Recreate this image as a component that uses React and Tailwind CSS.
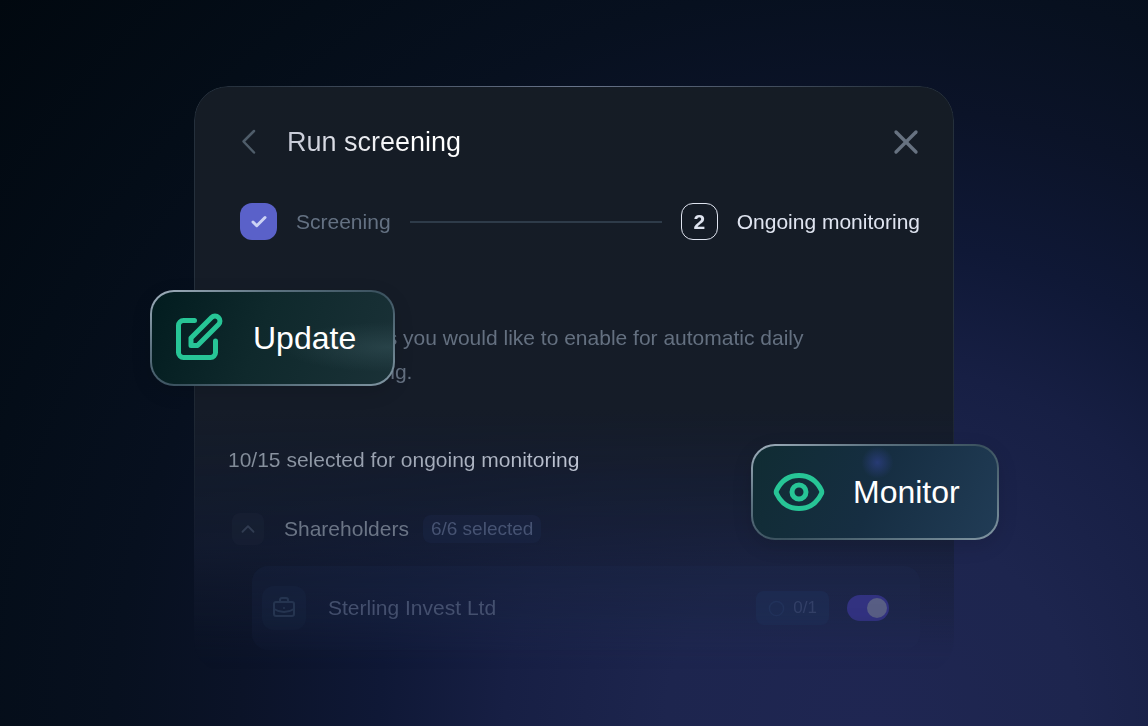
import React from "react";
import { Check, ChevronUp, BriefcaseBusiness, Circle, X } from "lucide-react";

function FloatingAction({ label, className, innerClassName, children }) {
  return (
    <button
      type="button"
      className={`absolute h-24 rounded-[24px] p-[2px] bg-[linear-gradient(155deg,#a3b2bf_0%,#5c7280_28%,#3a515e_52%,#556c79_72%,#8398a5_100%)] shadow-[0_6px_20px_rgba(0,0,0,0.12)] ${className}`}
    >
      <span
        className={`flex h-full items-center rounded-[22px] text-[32px] leading-10 text-white ${innerClassName}`}
      >
        {children}
        {label}
      </span>
    </button>
  );
}

function Stepper() {
  return (
    <ol className="mt-[43px] flex h-[37px] items-center pl-3">
      <li className="flex items-center gap-[19px] text-[#647182]">
        <span className="flex h-[37px] w-[37px] items-center justify-center rounded-[12px] bg-[#5a61c9] text-[#ccd2f4]">
          <Check size={18} strokeWidth={4} />
        </span>
        Screening
      </li>
      <li aria-hidden="true" className="mx-[19px] h-[2px] flex-1 bg-[#2e3b49]"></li>
      <li className="flex items-center gap-[19px] text-[#dfe4f0]">
        <span className="flex h-[37px] w-[37px] items-center justify-center rounded-[12px] border border-[#dfe4f0] font-bold">
          2
        </span>
        Ongoing monitoring
      </li>
    </ol>
  );
}

function EntityRow({ name, count }) {
  return (
    <div className="ml-6 mt-[19px] flex h-[84px] items-center rounded-2xl bg-[#24345a]/20 pl-2.5 pr-[31px]">
      <span className="flex h-11 w-11 items-center justify-center rounded-xl bg-[#1a2c48]/35 text-[#2a3a56]">
        <BriefcaseBusiness size={24} strokeWidth={2} />
      </span>
      <label htmlFor="entity-toggle" className="ml-5.5 text-[#4d5977]">
        {name}
      </label>
      <span className="ml-auto mr-[18px] flex h-[34px] items-center gap-2 rounded-lg bg-[#1d315a]/50 px-3 text-[17px] text-[#36446b]">
        <Circle size={17} strokeWidth={2} className="text-[#22345c]" />
        {count}
      </span>
      <span className="relative flex">
        <input
          id="entity-toggle"
          type="checkbox"
          role="switch"
          defaultChecked
          className="peer h-[26px] w-[42px] appearance-none rounded-full bg-[#252c55] checked:bg-[#353488]"
        />
        <span className="pointer-events-none absolute left-1 top-[3px] h-5 w-5 rounded-full bg-[#61678c] peer-checked:left-5"></span>
      </span>
    </div>
  );
}

export default function App() {
  return (
    <main className="min-h-screen overflow-hidden bg-[#01070e] bg-[radial-gradient(ellipse_100%_155%_at_76%_100%,#1f2652_0%,#1d254e_18%,#171f44_32%,#0f1836_43%,#0b1328_55%,#07101f_66%,#040d18_80%,#01080f_100%)] px-6 pt-[86px] font-['Liberation_Sans',Arial,sans-serif] text-[21px] leading-7">
      <div className="relative mx-auto w-full max-w-[760px]">
        <section className="relative rounded-[34px] bg-[linear-gradient(180deg,#151c25_0%,#151c28_55%,rgba(22,31,52,0.7)_78%,rgba(30,39,82,0)_100%)] px-[34px] pb-6 pt-[38px] [mask-image:linear-gradient(180deg,#000_60%,rgba(0,0,0,0.85)_90%,transparent_100%)]">
          {/* Outline, fading out toward the bottom */}
          <div className="pointer-events-none absolute inset-0 rounded-[34px] border border-[#25303c] [mask-image:linear-gradient(180deg,#000_40%,transparent_82%)]"></div>
          {/* Top edge highlight */}
          <div className="absolute inset-x-8 top-0 h-px bg-[linear-gradient(90deg,transparent,#68748a_50%,transparent)]"></div>

          <header className="flex h-9 items-center">
            <button type="button" aria-label="Back" className="ml-1 text-[#4f5d6a]">
              <svg width="34" height="34" viewBox="0 0 34 34" fill="none" stroke="currentColor" strokeWidth="2.5" strokeLinecap="round" strokeLinejoin="round">
                <path d="M22 6 11.500 16.500 22 27.500" />
              </svg>
            </button>
            <h1 className="ml-[21px] bg-[linear-gradient(90deg,#c5c9d6,#ffffff_70%)] bg-clip-text text-[27px] leading-9 text-transparent">
              Run screening
            </h1>
            <button type="button" aria-label="Close" className="ml-auto -mr-1.5 text-[#677281]">
              <X size={40} strokeWidth={2} />
            </button>
          </header>

          <Stepper />

          <p className="mt-[81px] max-w-[600px] leading-[34px] text-[#647080]">
            Select the records you would like to enable for automatic daily ongoing monitoring.
          </p>

          <h2 className="mt-[57px] w-fit bg-[linear-gradient(90deg,#838d9a,#c3c9d7)] bg-clip-text text-transparent">
            10/15 selected for ongoing monitoring
          </h2>

          <div className="mt-[37px] flex h-9 items-center">
            <button
              type="button"
              aria-label="Collapse shareholders"
              className="ml-1 flex h-8 w-8 items-center justify-center rounded-lg bg-[#1b2337]/60 text-[#344055]"
            >
              <ChevronUp size={22} strokeWidth={2} />
            </button>
            <h3 className="ml-5 text-[#737d8d]">Shareholders</h3>
            <span className="ml-3.5 rounded-lg bg-[#1c294a]/45 px-2 text-[19px] text-[#4b5877]">
              6/6 selected
            </span>
          </div>

          <EntityRow name="Sterling Invest Ltd" count="0/1" />
        </section>

        <FloatingAction
          label="Update"
          className="-left-11 top-[204px] w-[245px]"
          innerClassName="gap-7 pl-[23px] bg-[#132a2e] bg-[radial-gradient(ellipse_at_98%_60%,rgba(58,88,94,0.45)_0%,transparent_32%),linear-gradient(110deg,#021c1f,#0f292c_45%,#1a3137)]"
        >
          <svg width="50" height="50" viewBox="0 0 50 50" fill="none" stroke="#27c596" strokeWidth="5" strokeLinecap="round" strokeLinejoin="round">
            <path d="M19.500 7.500H8.500A5 5 0 0 0 3.500 12.500V39.500A5 5 0 0 0 8.500 44.500H35.500A5 5 0 0 0 40.500 39.500V28" />
            <path d="M16 32.500V25L36.500 4.500A4.800 4.800 0 0 1 43.500 11.500L22.500 32.500Z" />
          </svg>
        </FloatingAction>

        <FloatingAction
          label="Monitor"
          className="-right-[45px] top-[358px] w-[248px]"
          innerClassName="gap-7 pl-5 bg-[#17303f] bg-[radial-gradient(circle_at_51%_18%,rgba(42,61,125,0.85)_0,transparent_16px),linear-gradient(115deg,#102c33,#162e42_50%,#213c56)]"
        >
          <svg width="52" height="42" viewBox="0 0 52 42" fill="none" stroke="#27c596" strokeWidth="5" strokeLinejoin="round">
            <path d="M3.500 19.500C8.500 9 16 4.500 26 4.500S43.500 9 48.500 19.500Q49 21 48.500 22.500C43.500 33 36 37.500 26 37.500S8.500 33 3.500 22.500Q3 21 3.500 19.500Z" />
            <circle cx="26" cy="21" r="7" />
          </svg>
        </FloatingAction>
      </div>
    </main>
  );
}
